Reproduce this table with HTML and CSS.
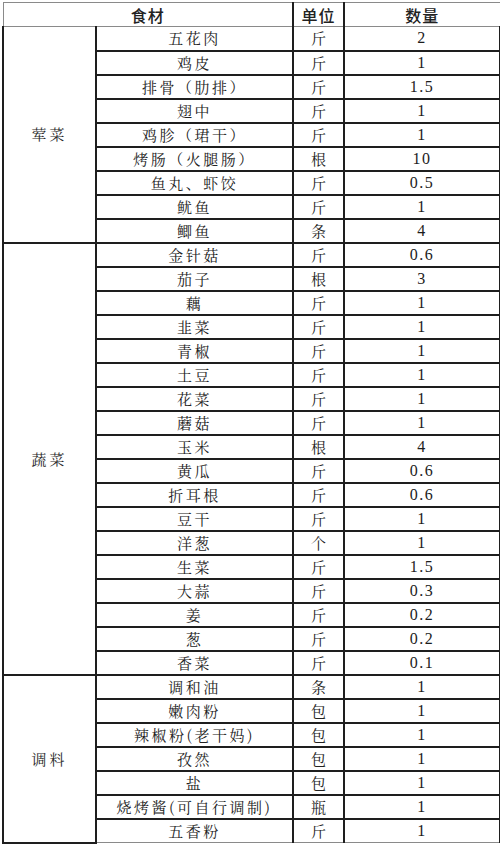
FILE: index.html
```html
<!DOCTYPE html>
<html lang="zh-CN">
<head>
<meta charset="utf-8">
<title>食材清单</title>
<link rel="stylesheet" href="styles.css">
</head>
<body>
<table class="sheet">
  <colgroup>
    <col class="c-cat"><col class="c-name"><col class="c-unit"><col class="c-qty">
  </colgroup>
  <thead>
    <tr class="head">
      <th colspan="2" class="h-name">食材</th>
      <th class="h-unit">单位</th>
      <th class="h-qty">数量</th>
    </tr>
  </thead>
  <tbody>
    <tr class="first"><td rowspan="9" class="cat">荤菜</td><td class="name">五花肉</td><td class="unit">斤</td><td class="qty">2</td></tr>
    <tr><td class="name">鸡皮</td><td class="unit">斤</td><td class="qty">1</td></tr>
    <tr><td class="name">排骨（肋排）</td><td class="unit">斤</td><td class="qty">1.5</td></tr>
    <tr><td class="name">翅中</td><td class="unit">斤</td><td class="qty">1</td></tr>
    <tr><td class="name">鸡胗（珺干）</td><td class="unit">斤</td><td class="qty">1</td></tr>
    <tr><td class="name">烤肠（火腿肠）</td><td class="unit">根</td><td class="qty">10</td></tr>
    <tr><td class="name">鱼丸、虾饺</td><td class="unit">斤</td><td class="qty">0.5</td></tr>
    <tr><td class="name">鱿鱼</td><td class="unit">斤</td><td class="qty">1</td></tr>
    <tr><td class="name">鲫鱼</td><td class="unit">条</td><td class="qty">4</td></tr>

    <tr><td rowspan="18" class="cat">蔬菜</td><td class="name">金针菇</td><td class="unit">斤</td><td class="qty">0.6</td></tr>
    <tr><td class="name">茄子</td><td class="unit">根</td><td class="qty">3</td></tr>
    <tr><td class="name">藕</td><td class="unit">斤</td><td class="qty">1</td></tr>
    <tr><td class="name">韭菜</td><td class="unit">斤</td><td class="qty">1</td></tr>
    <tr><td class="name">青椒</td><td class="unit">斤</td><td class="qty">1</td></tr>
    <tr><td class="name">土豆</td><td class="unit">斤</td><td class="qty">1</td></tr>
    <tr><td class="name">花菜</td><td class="unit">斤</td><td class="qty">1</td></tr>
    <tr><td class="name">蘑菇</td><td class="unit">斤</td><td class="qty">1</td></tr>
    <tr><td class="name">玉米</td><td class="unit">根</td><td class="qty">4</td></tr>
    <tr><td class="name">黄瓜</td><td class="unit">斤</td><td class="qty">0.6</td></tr>
    <tr><td class="name">折耳根</td><td class="unit">斤</td><td class="qty">0.6</td></tr>
    <tr><td class="name">豆干</td><td class="unit">斤</td><td class="qty">1</td></tr>
    <tr><td class="name">洋葱</td><td class="unit">个</td><td class="qty">1</td></tr>
    <tr><td class="name">生菜</td><td class="unit">斤</td><td class="qty">1.5</td></tr>
    <tr><td class="name">大蒜</td><td class="unit">斤</td><td class="qty">0.3</td></tr>
    <tr><td class="name">姜</td><td class="unit">斤</td><td class="qty">0.2</td></tr>
    <tr><td class="name">葱</td><td class="unit">斤</td><td class="qty">0.2</td></tr>
    <tr><td class="name">香菜</td><td class="unit">斤</td><td class="qty">0.1</td></tr>

    <tr><td rowspan="7" class="cat cat-low">调料</td><td class="name">调和油</td><td class="unit">条</td><td class="qty">1</td></tr>
    <tr><td class="name">嫩肉粉</td><td class="unit">包</td><td class="qty">1</td></tr>
    <tr><td class="name">辣椒粉(老干妈)</td><td class="unit">包</td><td class="qty">1</td></tr>
    <tr><td class="name">孜然</td><td class="unit">包</td><td class="qty">1</td></tr>
    <tr><td class="name">盐</td><td class="unit">包</td><td class="qty">1</td></tr>
    <tr><td class="name">烧烤酱(可自行调制)</td><td class="unit">瓶</td><td class="qty">1</td></tr>
    <tr><td class="name">五香粉</td><td class="unit">斤</td><td class="qty">1</td></tr>
  </tbody>
</table>
</body>
</html>
```

FILE: styles.css
```css
html, body {
  margin: 0;
  padding: 0;
  background: #ffffff;
}

body {
  padding: 2px 0 0 2px;
}

.sheet {
  border-collapse: collapse;
  table-layout: fixed;
  width: 497px;
  color: #1c1c1c;
  font-family: "Noto Serif CJK SC", "Noto Sans CJK SC", serif;
  font-size: 15px;
}

.c-cat { width: 93px; }
.c-name { width: 197px; }
.c-unit { width: 51px; }
.c-qty { width: 156px; }

.sheet th,
.sheet td {
  padding: 0;
  text-align: center;
  vertical-align: middle;
  border: 2px solid #1e1e1e;
  line-height: 20px;
  overflow: hidden;
  white-space: nowrap;
}

.sheet tr {
  height: 24px;
}

.head {
  height: 23px;
}

.head th {
  font-family: "Noto Sans CJK SC", sans-serif;
  font-weight: 500;
  font-size: 16px;
  letter-spacing: 1px;
  color: #222;
  border-top: 1px solid #8a8a8a;
  border-bottom: 1px solid #8a8a8a;
}

.head .h-name {
  border-left: 1px solid #8a8a8a;
}

.head .h-qty {
  border-right: 1px solid #8a8a8a;
}

.first td {
  border-top: 1px solid #8a8a8a;
}

.cat {
  border-left: 1px solid #8a8a8a;
  font-size: 15px;
  letter-spacing: 3px;
  padding-left: 3px;
  color: #2a2a2a;
}

.cat-low {
  vertical-align: top;
  padding-top: 110px;
}

.name {
  letter-spacing: 2.5px;
  padding-left: 2px;
  color: #222;
}

.unit {
  color: #222;
}

.qty {
  font-family: "Liberation Serif", serif;
  font-size: 16px;
  letter-spacing: 1.5px;
  border-right: 1px solid #8a8a8a;
}

tbody tr:last-child td {
  border-bottom: 1px solid #8a8a8a;
}
```
